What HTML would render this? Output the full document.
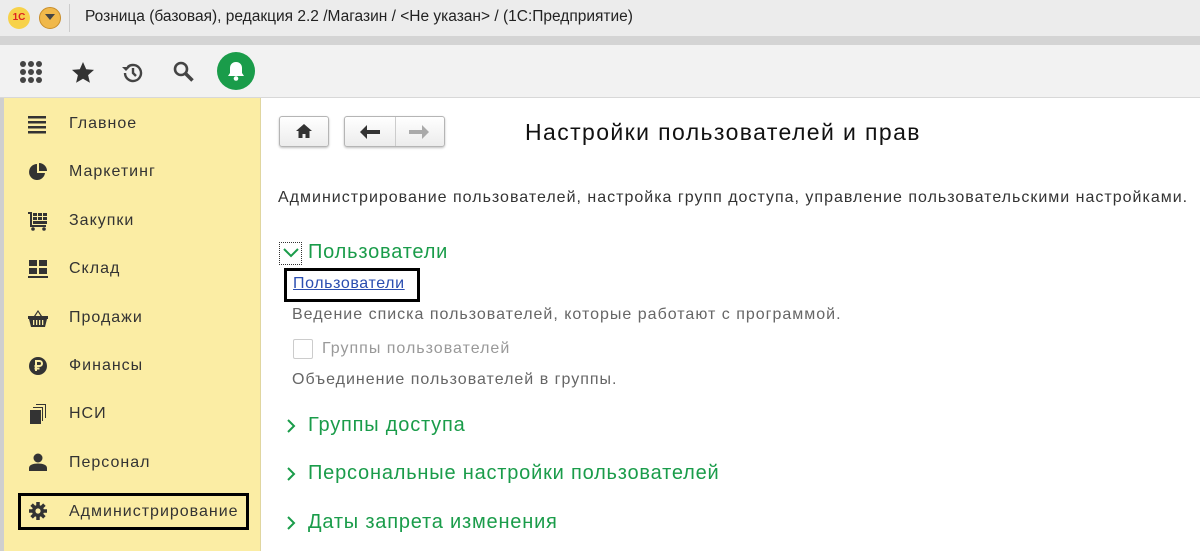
<!DOCTYPE html>
<html><head><meta charset="utf-8"><style>
*{margin:0;padding:0;box-sizing:border-box}
body{width:1200px;height:551px;overflow:hidden;background:#fff;font-family:"Liberation Sans",Arial,sans-serif;position:relative}
.abs{position:absolute}
#title{left:0;top:0;width:1200px;height:36px;background:#ececec}
#band{left:0;top:36px;width:1200px;height:9px;background:#d4d4d4}
#tb{left:0;top:45px;width:1200px;height:53px;background:#f2f2f2;border-bottom:1px solid #d8d8d8}
#side{left:0;top:98px;width:261px;height:453px;background:#fbeda4;border-right:1px solid #e0d6a0;border-left:4px solid #cfcfcf}
.mi{position:absolute;left:69px;font-size:16px;color:#333;letter-spacing:1px}
.ic{position:absolute;left:28px;width:20px;height:20px}
.t{position:absolute;white-space:nowrap;letter-spacing:1px}
.grn{color:#1a9c4a;font-size:20px;letter-spacing:0.8px}
.gray{color:#666;font-size:16px}
.btn{position:absolute;border:1px solid #b5b5b5;border-radius:3px;background:linear-gradient(#fff,#ececec);box-shadow:0 1px 2px rgba(0,0,0,.25)}
</style></head><body>
<div id="title" class="abs"></div>
<div class="abs" style="left:8px;top:7px;width:22px;height:22px;border-radius:50%;background:#f7d24a;color:#d22;font-size:10px;font-weight:bold;text-align:center;line-height:22px">1С</div>
<div class="abs" style="left:39px;top:7px;width:22px;height:22px;border-radius:50%;background:#f0b84a;border:1px solid #c98e2a"></div>
<div class="abs" style="left:45px;top:14px;width:0;height:0;border-left:5px solid transparent;border-right:5px solid transparent;border-top:6px solid #444"></div>
<div class="abs" style="left:69px;top:4px;width:1px;height:28px;background:#ccc"></div>
<div class="t" style="left:85px;top:8px;font-size:15.5px;color:#222;letter-spacing:0">Розница (базовая), редакция 2.2 /Магазин / &lt;Не указан&gt; /  (1С:Предприятие)</div>
<div id="band" class="abs"></div>
<div id="tb" class="abs"></div>
<svg class="abs" style="left:19px;top:60px" width="24" height="24" viewBox="0 0 24 24" fill="#444"><circle cx="4" cy="4" r="3"/><circle cx="12" cy="4" r="3"/><circle cx="20" cy="4" r="3"/><circle cx="4" cy="12" r="3"/><circle cx="12" cy="12" r="3"/><circle cx="20" cy="12" r="3"/><circle cx="4" cy="20" r="3"/><circle cx="12" cy="20" r="3"/><circle cx="20" cy="20" r="3"/></svg>
<svg class="abs" style="left:71px;top:61px" width="24" height="24" viewBox="0 0 24 24" fill="#333"><path d="M12 1l3.2 7.2 7.8.7-5.9 5.2 1.8 7.7L12 17.8 5.1 21.8l1.8-7.7L1 8.9l7.8-.7z"/></svg>
<svg class="abs" style="left:120px;top:60px" width="26" height="26" viewBox="0 0 26 26" fill="none" stroke="#444" stroke-width="2.4"><path d="M5 13a8 8 0 1 0 2.5-5.8"/><path d="M2 7l4 4 4-4" fill="#444" stroke="none"/><path d="M13 8v5l3 3"/></svg>
<svg class="abs" style="left:172px;top:60px" width="24" height="24" viewBox="0 0 24 24" fill="none" stroke="#444" stroke-width="2.6"><circle cx="9" cy="9" r="6"/><path d="M13.5 13.5l7 7" stroke-width="3.5"/></svg>
<div class="abs" style="left:217px;top:52px;width:38px;height:38px;border-radius:50%;background:#1a9c4a"></div>
<svg class="abs" style="left:226px;top:60px" width="20" height="22" viewBox="0 0 20 22" fill="#fff"><path d="M10 2c-4 0-6 3-6 6v5l-2 3h16l-2-3V8c0-3-2-6-6-6z"/><circle cx="10" cy="18.5" r="2.3"/></svg>

<div id="side" class="abs"></div>
<svg class="ic" style="top:115px" viewBox="0 0 20 20" fill="#333"><rect x="0" y="1" width="18" height="2.5"/><rect x="0" y="6" width="18" height="2.5"/><rect x="0" y="11" width="18" height="2.5"/><rect x="0" y="16" width="18" height="2.5"/></svg>
<div class="mi" style="top:115px">Главное</div>
<svg class="ic" style="top:162px" viewBox="0 0 20 20" fill="#333"><path d="M9 2a8 8 0 1 0 8 9H9z"/><path d="M11 1v8h8a8 8 0 0 0-8-8z"/></svg>
<div class="mi" style="top:163px">Маркетинг</div>
<svg class="ic" style="top:211px" viewBox="0 0 20 20" fill="#333"><path d="M0 1h4v13h14v2H2V3H0z"/><rect x="5" y="2" width="4" height="3"/><rect x="10" y="2" width="4" height="3"/><rect x="15" y="2" width="4" height="3"/><rect x="5" y="6" width="4" height="3"/><rect x="10" y="6" width="4" height="3"/><rect x="15" y="6" width="4" height="3"/><rect x="5" y="10" width="14" height="3"/><circle cx="5" cy="18" r="1.8"/><circle cx="16" cy="18" r="1.8"/></svg>
<div class="mi" style="top:212px">Закупки</div>
<svg class="ic" style="top:259px" viewBox="0 0 20 20" fill="#333"><rect x="1" y="1" width="8" height="6"/><rect x="11" y="1" width="8" height="6"/><rect x="1" y="9" width="8" height="6"/><rect x="11" y="9" width="8" height="6"/><rect x="0" y="17" width="20" height="2"/></svg>
<div class="mi" style="top:260px">Склад</div>
<svg class="ic" style="top:308px" viewBox="0 0 20 20" fill="#333"><path d="M6 8L10 2l4 6h-1.5L10 4 7.5 8z"/><path d="M0 8h20v3h-1l-2 8H3L1 11H0z"/><g fill="#fbeda4"><rect x="5" y="12" width="1.3" height="5"/><rect x="8" y="12" width="1.3" height="5"/><rect x="11" y="12" width="1.3" height="5"/><rect x="14" y="12" width="1.3" height="5"/></g></svg>
<div class="mi" style="top:309px">Продажи</div>
<svg class="ic" style="top:356px" viewBox="0 0 20 20"><circle cx="10" cy="10" r="9" fill="#333"/><path d="M8 15V5h3.5a2.5 2.5 0 0 1 0 5H6.5M6.5 12.5h5" stroke="#fbeda4" stroke-width="2" fill="none"/></svg>
<div class="mi" style="top:357px">Финансы</div>
<svg class="ic" style="top:404px" viewBox="0 0 20 20" fill="#333"><rect x="2" y="6" width="11" height="14"/><path d="M5 3h10v14h-1V4H5z"/><path d="M8 0h10v14h-1V1H8z"/></svg>
<div class="mi" style="top:405px">НСИ</div>
<svg class="ic" style="top:452px" viewBox="0 0 20 20" fill="#333"><circle cx="10" cy="6" r="4.5"/><path d="M1 19v-3c0-3 4-4.5 9-4.5s9 1.5 9 4.5v3z"/></svg>
<div class="mi" style="top:454px">Персонал</div>
<div class="abs" style="left:18px;top:493px;width:231px;height:37px;border:3px solid #000"></div>
<svg class="ic" style="top:501px" viewBox="0 0 20 20"><g stroke="#333" stroke-width="3.5"><path d="M10 1v18M1 10h18M3.6 3.6l12.8 12.8M16.4 3.6L3.6 16.4"/></g><circle cx="10" cy="10" r="6" fill="#333"/><circle cx="10" cy="10" r="2.6" fill="#fbeda4"/></svg>
<div class="mi" style="top:503px">Администрирование</div>

<div class="btn" style="left:279px;top:116px;width:50px;height:31px"></div>
<svg class="abs" style="left:295px;top:123px" width="18" height="16" viewBox="0 0 18 16" fill="#333"><path d="M9 1L1 8h2.5v7h4v-4h3v4h4V8H17z"/></svg>
<div class="btn" style="left:344px;top:116px;width:101px;height:31px"></div>
<div class="abs" style="left:395px;top:117px;width:1px;height:29px;background:#ccc"></div>
<svg class="abs" style="left:359px;top:124px" width="22" height="16" viewBox="0 0 22 16" fill="#333"><path d="M1 8l7-7v5h13v4H8v5z"/></svg>
<svg class="abs" style="left:408px;top:124px" width="22" height="16" viewBox="0 0 22 16" fill="#aaa"><path d="M21 8l-7-7v5H1v4h13v5z"/></svg>
<div class="t" style="left:525px;top:119px;font-size:23px;color:#111;letter-spacing:1.4px">Настройки пользователей и прав</div>
<div class="t" style="left:278px;top:189px;font-size:16px;color:#333">Администрирование пользователей, настройка групп доступа, управление пользовательскими настройками.</div>
<div class="abs" style="left:279px;top:242px;width:23px;height:23px;border:1px dotted #333"></div>
<svg class="abs" style="left:282px;top:246px" width="18" height="14" viewBox="0 0 18 14" fill="none" stroke="#1a9c4a" stroke-width="2"><path d="M2 3l7 7 7-7"/></svg>
<div class="t grn" style="left:308px;top:241px">Пользователи</div>
<div class="abs" style="left:284px;top:268px;width:136px;height:34px;border:3px solid #000"></div>
<div class="t" style="left:293px;top:275px;font-size:16px;color:#2a4db0;text-decoration:underline;letter-spacing:0.6px">Пользователи</div>
<div class="t gray" style="left:292px;top:306px">Ведение списка пользователей, которые работают с программой.</div>
<div class="abs" style="left:293px;top:339px;width:20px;height:20px;border:1px solid #ccc;border-radius:2px"></div>
<div class="t" style="left:322px;top:340px;font-size:16px;color:#999">Группы пользователей</div>
<div class="t gray" style="left:292px;top:371px">Объединение пользователей в группы.</div>
<svg class="abs" style="left:285px;top:418px" width="12" height="16" viewBox="0 0 12 16" fill="none" stroke="#1a9c4a" stroke-width="2"><path d="M3 2l6 6-6 6"/></svg>
<div class="t grn" style="left:308px;top:414px">Группы доступа</div>
<svg class="abs" style="left:285px;top:466px" width="12" height="16" viewBox="0 0 12 16" fill="none" stroke="#1a9c4a" stroke-width="2"><path d="M3 2l6 6-6 6"/></svg>
<div class="t grn" style="left:308px;top:462px">Персональные настройки пользователей</div>
<svg class="abs" style="left:285px;top:515px" width="12" height="16" viewBox="0 0 12 16" fill="none" stroke="#1a9c4a" stroke-width="2"><path d="M3 2l6 6-6 6"/></svg>
<div class="t grn" style="left:308px;top:511px">Даты запрета изменения</div>
</body></html>
